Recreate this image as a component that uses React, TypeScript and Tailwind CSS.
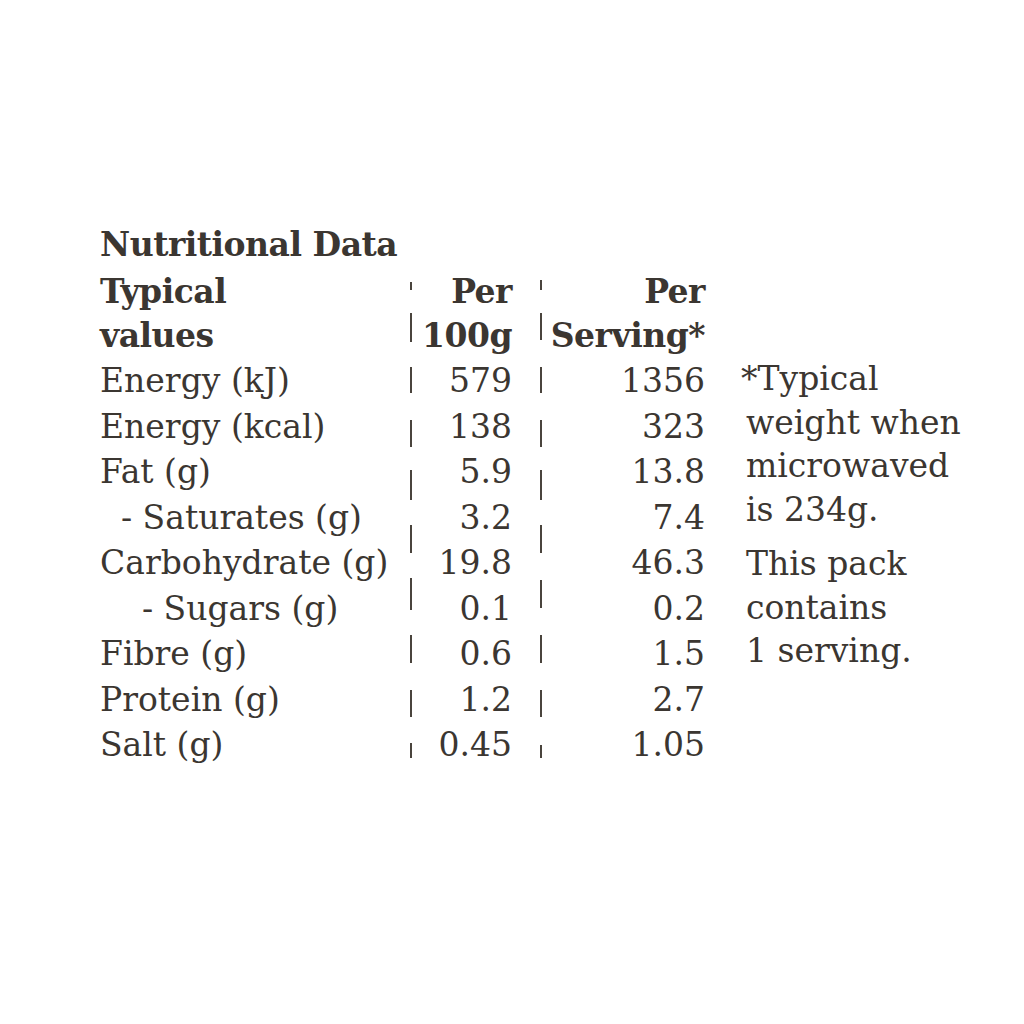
const labels = [
  "Energy (kJ)",
  "Energy (kcal)",
  "Fat (g)",
  "  - Saturates (g)",
  "Carbohydrate (g)",
  "    - Sugars (g)",
  "Fibre (g)",
  "Protein (g)",
  "Salt (g)",
];
const per100 = ["579", "138", "5.9", "3.2", "19.8", "0.1", "0.6", "1.2", "0.45"];
const perServing = ["1356", "323", "13.8", "7.4", "46.3", "0.2", "1.5", "2.7", "1.05"];

// little divider ticks, top margin + height, stacked down the column
const ticksA = [
  "mt-[14px] h-[8px]",
  "mt-[23px] h-[29px]",
  "mt-[25px] h-[26px]",
  "mt-[27px] h-[27px]",
  "mt-[23px] h-[30px]",
  "mt-[25px] h-[28px]",
  "mt-[25px] h-[32px]",
  "mt-[25px] h-[28px]",
  "mt-[27px] h-[27px]",
  "mt-[26px] h-[15px]",
];
const ticksB = [
  "mt-[12px] h-[10px]",
  "mt-[23px] h-[27px]",
  "mt-[27px] h-[26px]",
  "mt-[27px] h-[27px]",
  "mt-[23px] h-[30px]",
  "mt-[25px] h-[28px]",
  "mt-[27px] h-[28px]",
  "mt-[27px] h-[28px]",
  "mt-[27px] h-[27px]",
  "mt-[28px] h-[13px]",
];

function Ticks({ list }: { list: string[] }) {
  return (
    <div className="flex flex-col w-[2px]">
      {list.map((c, i) => (
        <div key={i} className={`w-[2px] bg-[#4a443d] ${c}`} />
      ))}
    </div>
  );
}

export default function App() {
  return (
    <div
      className="w-[1024px] h-[1024px] bg-white text-[#3b3631] pt-[222px] pl-[100px] text-[33px]"
      style={{ fontFamily: '"DejaVu Serif", serif' }}
    >
      <div className="font-bold leading-[46px] tracking-[-0.5px]">Nutritional Data</div>
      <div className="flex">
        {/* Labels */}
        <div className="w-[310px] flex flex-col whitespace-pre pt-[2px]">
          <div className="font-bold leading-[44px] tracking-[-0.5px]">Typical</div>
          <div className="font-bold leading-[44px] tracking-[-0.5px]">values</div>
          {labels.map((l) => (
            <div key={l} className="leading-[45.5px]">{l}</div>
          ))}
        </div>

        <Ticks list={ticksA} />

        {/* Per 100g */}
        <div className="w-[100px] flex flex-col text-right pt-[2px]">
          <div className="font-bold leading-[44px] tracking-[-0.5px]">Per</div>
          <div className="font-bold leading-[44px] tracking-[-0.5px]">100g</div>
          {per100.map((v, i) => (
            <div key={i} className="leading-[45.5px]">{v}</div>
          ))}
        </div>

        <div className="w-[28px]" />
        <Ticks list={ticksB} />

        {/* Per serving */}
        <div className="w-[163px] flex flex-col text-right pt-[2px]">
          <div className="font-bold leading-[44px] tracking-[-0.5px]">Per</div>
          <div className="font-bold leading-[44px] tracking-[-0.5px]">Serving*</div>
          {perServing.map((v, i) => (
            <div key={i} className="leading-[45.5px]">{v}</div>
          ))}
        </div>

        {/* Footnote */}
        <div className="pt-[89px] pl-[36px] leading-[43.5px]">
          <p>*Typical</p>
          <div className="pl-[5px]">
            <p>weight when</p>
            <p>microwaved</p>
            <p>is 234g.</p>
            <p className="mt-[11px]">This pack</p>
            <p>contains</p>
            <p>1 serving.</p>
          </div>
        </div>
      </div>
    </div>
  );
}
